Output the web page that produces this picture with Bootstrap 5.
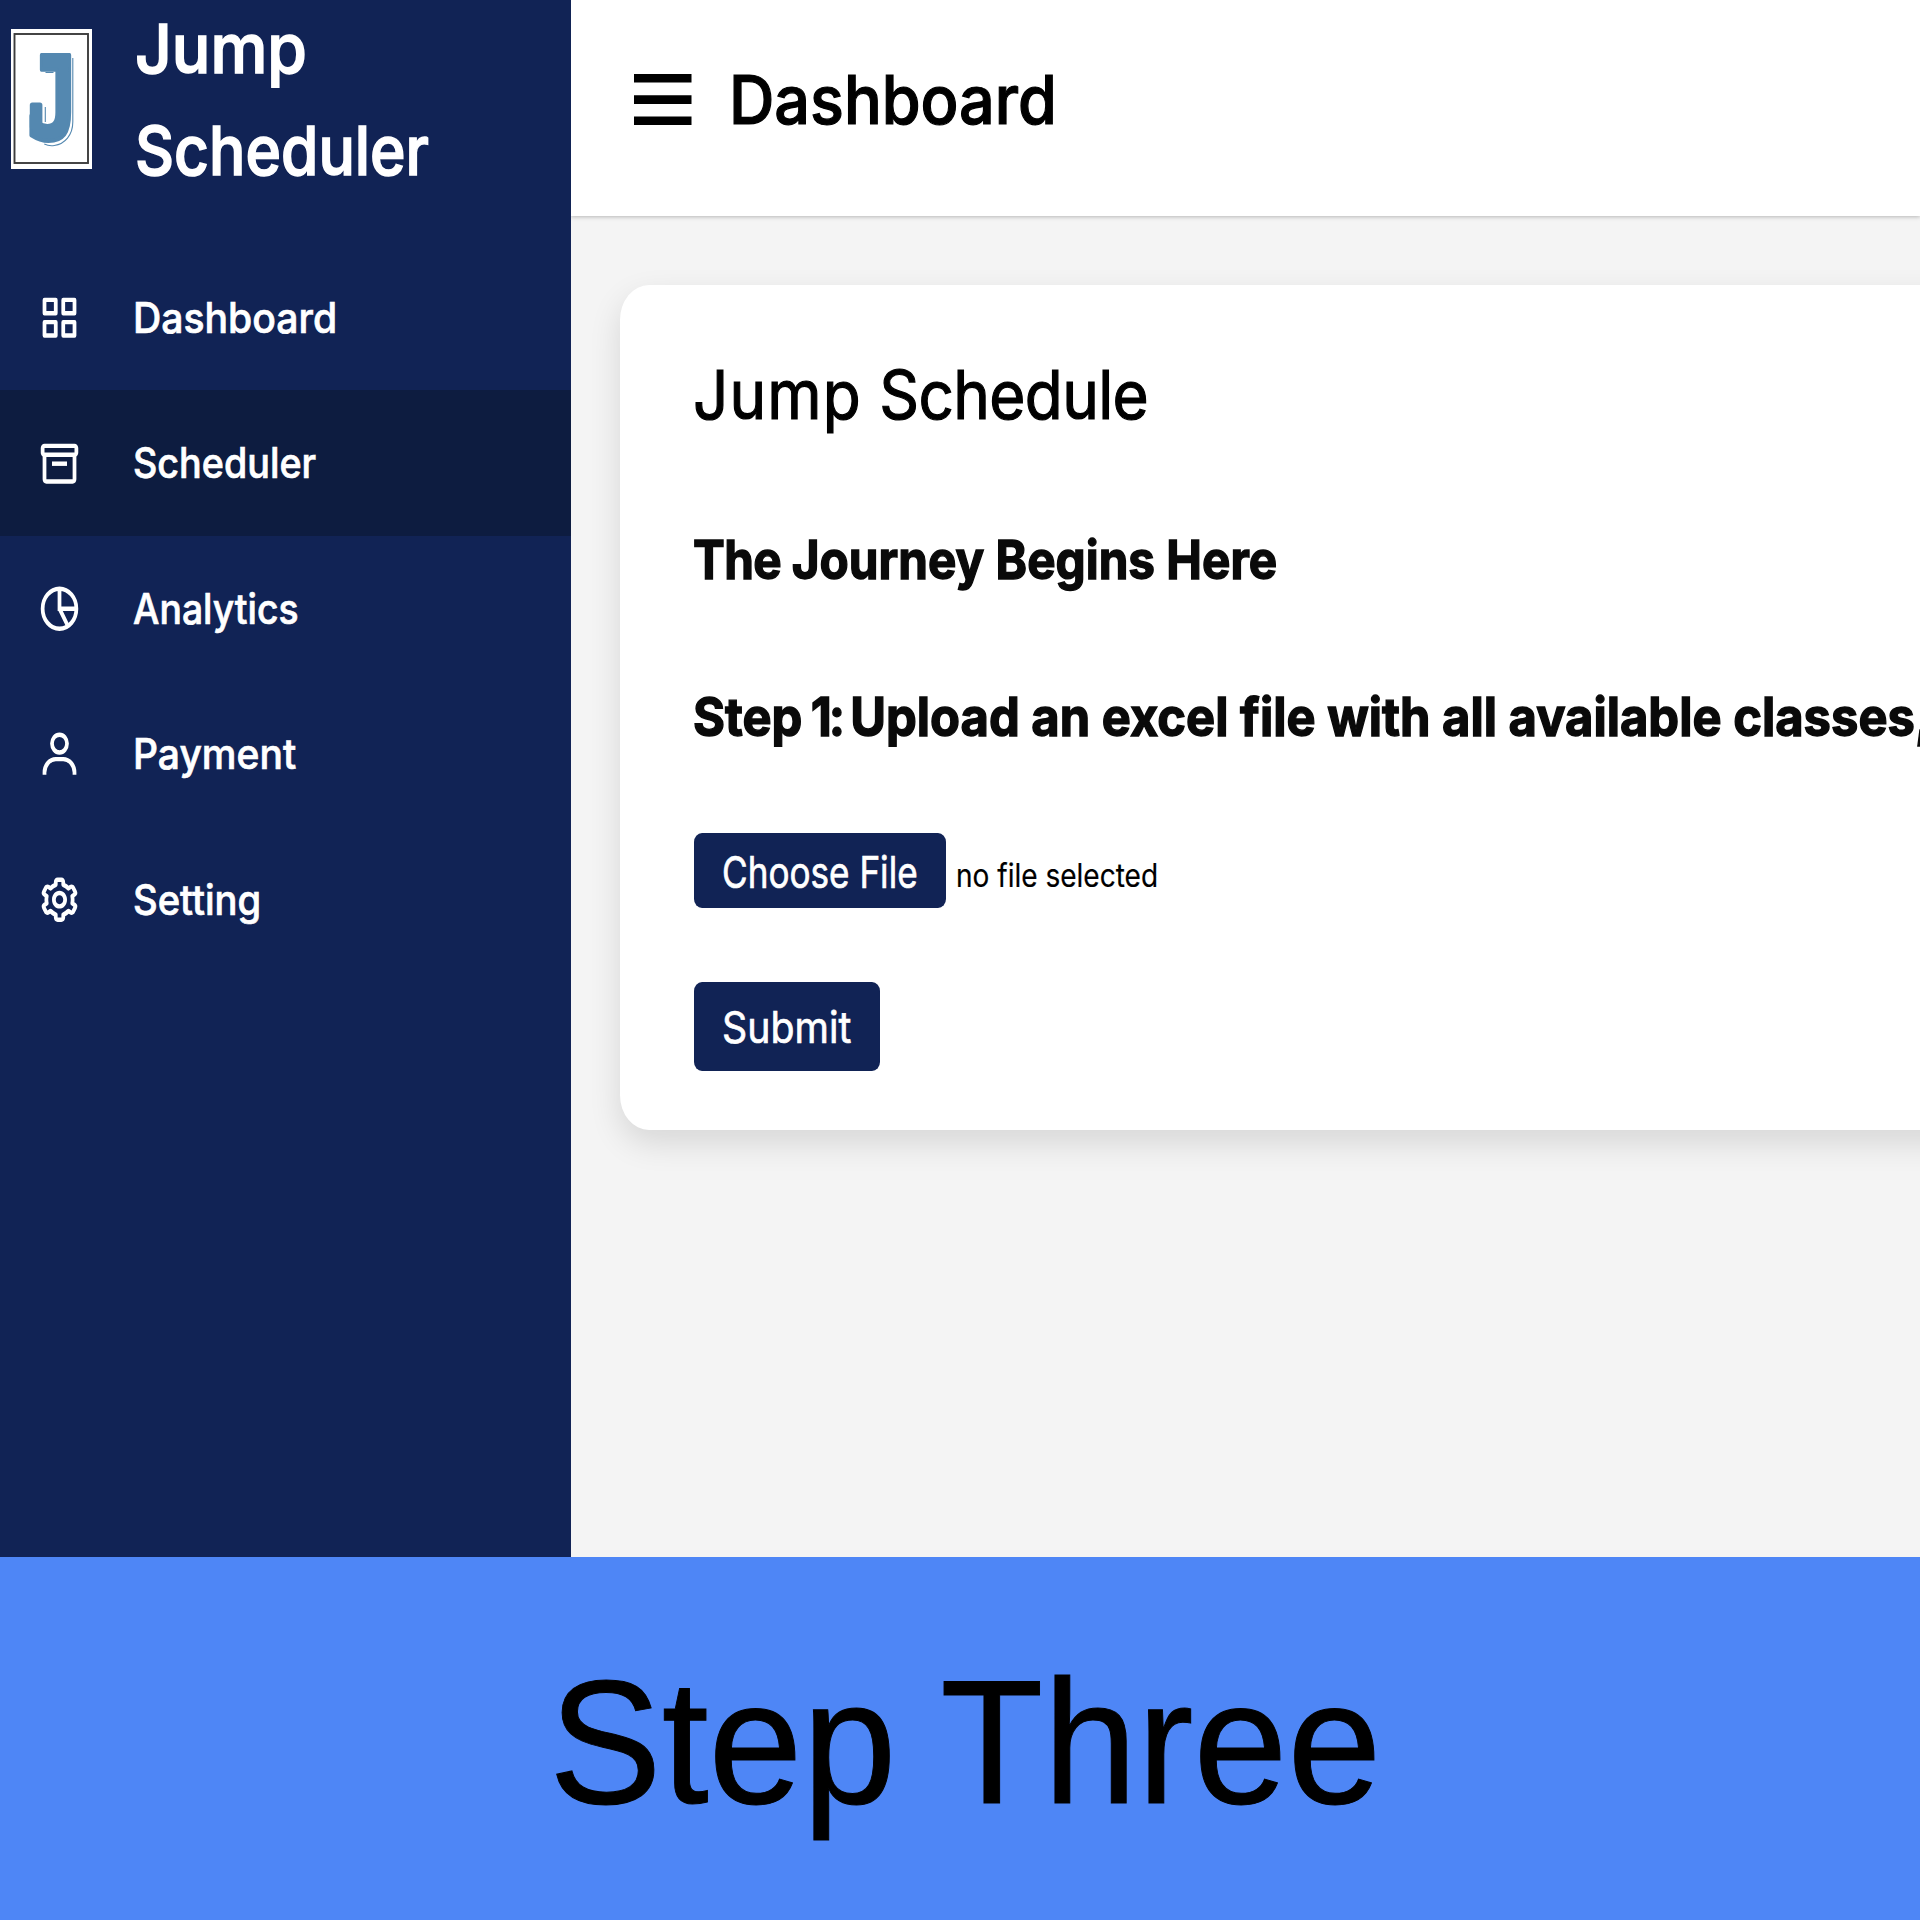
<!DOCTYPE html>
<html lang="en">
<head>
<meta charset="utf-8">
<meta name="viewport" content="width=device-width, initial-scale=1">
<title>Jump Scheduler</title>
<link href="https://cdn.jsdelivr.net/npm/bootstrap@5.3.0/dist/css/bootstrap.min.css" rel="stylesheet">
<style>
  :root { --navy: #112355; --navy-dark: #0d1c40; --page: #f4f4f4; --banner: #4e86f6; }
  html, body { width: 1920px; height: 1920px; overflow: hidden; }
  body { font-family: Inter, "Liberation Sans", sans-serif; color: #000; background: var(--banner); }

  /* condensed lettering: each label sets its own horizontal factor */
  .cond { display: block; white-space: nowrap; transform: scaleX(var(--sx, .9)); transform-origin: 0 50%; -webkit-text-stroke: var(--ink, .7px) currentColor; }

  .app-shell { height: 1557.4px; }
  .side { width: 571px; background: var(--navy); color: #fff; }
  .brand { height: 244.5px; padding-left: 10.5px; }
  .brand svg { margin-top: 28.7px; }
  .brand-name { --ink: 1.6px; margin: -1.7px 0 0 43.6px; font-size: 68px; font-weight: 500; line-height: 101.5px; }
  .side .nav-link { height: 145.5px; padding: 1px 0 0 37px; color: #fff; font-size: 42.5px; font-weight: 500; line-height: 1; border-radius: 0; }
  .side .nav-link.active { background: var(--navy-dark); }
  .side .nav-link svg { width: 45px; height: 53.4px; margin-right: 50.7px; }

  .main-pane { background: var(--page); min-width: 0; }
  .topbar { --ink: 1.2px; height: 215.5px; padding: 0 0 17px 63px; background: #fff; box-shadow: 0 1px 4px rgba(0,0,0,.25); }
  .topbar-title { margin-left: 37.5px; font-size: 67px; font-weight: 500; line-height: 1; }
  .panel { width: 1500px; height: 845px; margin: 69.5px 0 0 49px; padding: 62px 0 0 73px; border: 0; border-radius: 29px / 35px; box-shadow: 0 13px 32px rgba(0,0,0,.12); }
  .panel-title { --ink: 1.2px; font-size: 67px; font-weight: 400; line-height: 96px; margin-bottom: -1px; }
  .step-text { --ink: 1.4px; font-size: 53px; font-weight: 700; line-height: 80px; color: #0a0a0a; }
  .word-wide { letter-spacing: 1.2px; }
  .word-narrow { letter-spacing: -.7px; }
  .word-tight { letter-spacing: -3.5px; }
  .btn-navy { --bs-btn-bg: var(--navy); --bs-btn-color: #fff; --bs-btn-hover-bg: var(--navy-dark); --bs-btn-hover-color: #fff;
    border: 0; border-radius: 8px / 9px; padding: 0 0 0 28.5px; margin-left: .5px; font-size: 44px; line-height: 1; text-align: left; }
  .btn-choose { width: 252.5px; height: 75.3px; padding-top: 3px; }
  .btn-submit { width: 186.5px; height: 89.5px; }
  .file-note { --ink: .2px; font-size: 32px; line-height: 1; margin: 12px 0 0 10px; }

  .banner { --ink: 1px; height: 362.6px; padding: 90px 0 0 549.4px; font-family: "Liberation Sans", Arial, sans-serif; font-size: 177px; line-height: 190px; }
</style>
</head>
<body>
<div class="app-shell d-flex overflow-hidden">
  <aside class="side flex-shrink-0">
    <div class="brand d-flex align-items-start">
      <svg class="flex-shrink-0" width="81" height="140" viewBox="0 0 81 140" aria-label="Jump Scheduler logo">
        <rect width="81" height="140" fill="#fff"/>
        <rect x="3.5" y="5" width="73.5" height="129" fill="none" stroke="#3c3c3c" stroke-width="1.9"/>
        <text transform="translate(15.2 110) scale(.76 1)" font-family="'DejaVu Sans Mono', monospace" font-weight="700" font-size="116" fill="#5488b0" stroke="#5488b0" stroke-width="4" stroke-linejoin="round">J</text>
        <rect x="18.8" y="73.5" width="12.6" height="27" rx="2.5" fill="#5488b0"/>
        <path d="M61.8 29v64c0 13-8 22-18.500 23.500c-4 .6-7 0-10-1.500M34.500 43.500h8M34.300 78v15" fill="none" stroke="#5488b0" stroke-width="1.1"/>
      </svg>
      <div class="brand-name">
        <span class="cond" style="--sx:.942">Jump</span>
        <span class="cond" style="--sx:.89">Scheduler</span>
      </div>
    </div>
    <nav class="nav flex-column">
      <a class="nav-link d-flex align-items-center" href="#">
        <svg viewBox="0 0 24 24" preserveAspectRatio="none" fill="currentColor"><path d="M10 3H4a1 1 0 0 0-1 1v6a1 1 0 0 0 1 1h6a1 1 0 0 0 1-1V4a1 1 0 0 0-1-1zM9 9H5V5h4v4zm11-6h-6a1 1 0 0 0-1 1v6a1 1 0 0 0 1 1h6a1 1 0 0 0 1-1V4a1 1 0 0 0-1-1zm-1 6h-4V5h4v4zm-9 4H4a1 1 0 0 0-1 1v6a1 1 0 0 0 1 1h6a1 1 0 0 0 1-1v-6a1 1 0 0 0-1-1zm-1 6H5v-4h4v4zm11-6h-6a1 1 0 0 0-1 1v6a1 1 0 0 0 1 1h6a1 1 0 0 0 1-1v-6a1 1 0 0 0-1-1zm-1 6h-4v-4h4v4z"/></svg>
        <span class="cond" style="--sx:.921">Dashboard</span>
      </a>
      <a class="nav-link active d-flex align-items-center" href="#">
        <svg viewBox="0 0 24 24" preserveAspectRatio="none" fill="currentColor"><path d="M20 3H4c-1.103 0-2 .897-2 2v2c0 .736.405 1.375 1 1.722V19c0 1.103.897 2 2 2h14c1.103 0 2-.897 2-2V8.722c.595-.347 1-.986 1-1.722V5c0-1.103-.897-2-2-2zM4 5h16l.002 2H4V5zm1 14V9h14v10H5z"/><path d="M8 11h8v2H8z"/></svg>
        <span class="cond" style="--sx:.887">Scheduler</span>
      </a>
      <a class="nav-link d-flex align-items-center" href="#">
        <svg viewBox="0 0 24 24" preserveAspectRatio="none" fill="none" stroke="currentColor" stroke-width="2"><circle cx="12" cy="12" r="9"/><path d="M12 3v9h9M12 12l4.600 8"/></svg>
        <span class="cond" style="--sx:.878">Analytics</span>
      </a>
      <a class="nav-link d-flex align-items-center" href="#">
        <svg viewBox="0 0 24 24" preserveAspectRatio="none" fill="currentColor"><path d="M12 2a5 5 0 1 0 5 5 5 5 0 0 0-5-5zm0 8a3 3 0 1 1 3-3 3 3 0 0 1-3 3zm9 11v-1a7 7 0 0 0-7-7h-4a7 7 0 0 0-7 7v1h2v-1a5 5 0 0 1 5-5h4a5 5 0 0 1 5 5v1z"/></svg>
        <span class="cond" style="--sx:.918">Payment</span>
      </a>
      <a class="nav-link d-flex align-items-center" href="#">
        <svg viewBox="0 0 24 24" preserveAspectRatio="none" fill="currentColor"><path d="M12 16c2.206 0 4-1.794 4-4s-1.794-4-4-4-4 1.794-4 4 1.794 4 4 4zm0-6c1.084 0 2 .916 2 2s-.916 2-2 2-2-.916-2-2 .916-2 2-2z"/><path d="m2.845 16.136 1 1.730c.531.917 1.809 1.261 2.730.730l.529-.306A8.100 8.100 0 0 0 9 19.402V20c0 1.103.897 2 2 2h2c1.103 0 2-.897 2-2v-.598a8.132 8.132 0 0 0 1.896-1.111l.529.306c.923.530 2.198.188 2.731-.731l.999-1.729a2.001 2.001 0 0 0-.731-2.732l-.505-.292a7.718 7.718 0 0 0 0-2.224l.505-.292a2.002 2.002 0 0 0 .731-2.732l-.999-1.729c-.531-.920-1.808-1.265-2.731-.732l-.529.306A8.100 8.100 0 0 0 15 4.598V4c0-1.103-.897-2-2-2h-2c-1.103 0-2 .897-2 2v.598a8.132 8.132 0 0 0-1.896 1.111l-.529-.306c-.924-.531-2.200-.187-2.731.732l-.999 1.729a2.001 2.001 0 0 0 .731 2.732l.505.292a7.683 7.683 0 0 0 0 2.223l-.505.292a2.003 2.003 0 0 0-.731 2.733zm3.326-2.758A5.703 5.703 0 0 1 6 12c0-.462.058-.926.170-1.378a.999.999 0 0 0-.470-1.108l-1.123-.650.998-1.729 1.145.662a.997.997 0 0 0 1.188-.142 6.071 6.071 0 0 1 2.384-1.399A1 1 0 0 0 11 5.300V4h2v1.300a1 1 0 0 0 .708.956 6.083 6.083 0 0 1 2.384 1.399.999.999 0 0 0 1.188.142l1.144-.661 1 1.729-1.124.649a1 1 0 0 0-.470 1.108c.112.452.170.916.170 1.378 0 .461-.058.925-.171 1.378a1 1 0 0 0 .471 1.108l1.123.649-.998 1.729-1.145-.661a.996.996 0 0 0-1.188.142 6.071 6.071 0 0 1-2.384 1.399A1 1 0 0 0 13 18.700l.002 1.300H11v-1.300a1 1 0 0 0-.708-.956 6.083 6.083 0 0 1-2.384-1.399.992.992 0 0 0-1.188-.141l-1.144.662-1-1.729 1.124-.651a1 1 0 0 0 .471-1.108z"/></svg>
        <span class="cond" style="--sx:.898">Setting</span>
      </a>
    </nav>
  </aside>

  <main class="main-pane flex-grow-1 overflow-hidden">
    <header class="topbar d-flex align-items-center">
      <svg class="flex-shrink-0" width="57.5" height="51" viewBox="0 0 57.5 51"><path d="M0 0h57.500v8.600H0zM0 21.300h57.500v8.600H0zM0 42.600h57.500v8.400H0z"/></svg>
      <span class="topbar-title"><span class="cond" style="--sx:.938">Dashboard</span></span>
    </header>
    <section class="panel card">
      <h1 class="panel-title cond mt-0" style="--sx:.926"><span class="word-wide">Jump</span> <span class="word-narrow">Schedule</span></h1>
      <h2 class="step-text cond mb-0" style="--sx:.9;margin-top:78px"><span class="word-narrow">The </span>Journey Begins Here</h2>
      <h2 class="step-text cond mb-0" style="--sx:.923;margin-top:77px">Step<span class="word-tight"> 1: </span>Upload an excel file with all available classes,</h2>
      <div class="d-flex align-items-center" style="margin-top:75.5px">
        <button type="button" class="btn btn-navy btn-choose flex-shrink-0"><span class="cond" style="--sx:.798">Choose File</span></button>
        <span class="file-note"><span class="cond" style="--sx:.876">no file selected</span></span>
      </div>
      <button type="submit" class="btn btn-navy btn-submit" style="margin-top:74px"><span class="cond" style="--sx:.893">Submit</span></button>
    </section>
  </main>
</div>
<footer class="banner"><span class="cond" style="--sx:.954">Step Three</span></footer>
<script src="https://cdn.jsdelivr.net/npm/bootstrap@5.3.0/dist/js/bootstrap.bundle.min.js"></script>
</body>
</html>
